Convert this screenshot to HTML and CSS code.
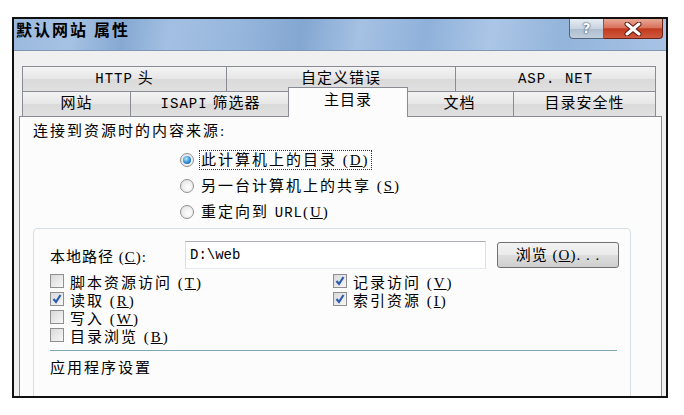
FILE: index.html
```html
<!DOCTYPE html>
<html>
<head>
	<meta charset="utf-8">
	<title>默认网站 属性</title>
	<link rel="stylesheet" href="styles.css">
</head>
<body>
<div class="window">
	<div class="titlebar">
		<span class="title">默认网站 属性</span>
		<div class="caption-buttons">
			<span class="btn-help">?</span>
			<span class="btn-close">
				<svg width="20" height="14" viewBox="0 0 20 14">
					<path d="M4 2 L16 12 M16 2 L4 12" stroke="#5a1a10" stroke-width="5" stroke-linecap="round"/>
					<path d="M4 2 L16 12 M16 2 L4 12" stroke="#ffffff" stroke-width="3" stroke-linecap="round"/>
				</svg>
			</span>
		</div>
	</div>

	<div class="client">
		<div class="tab-row">
			<div class="tab w-http"><span class="mono">HTTP</span> 头</div>
			<div class="tab w-errors">自定义错误</div>
			<div class="tab w-asp last"><span class="mono">ASP. NET</span></div>
		</div>
		<div class="tab-row">
			<div class="tab w-site">网站</div>
			<div class="tab w-isapi"><span class="mono">ISAPI</span> 筛选器</div>
			<div class="tab w-home selected">主目录</div>
			<div class="tab w-docs">文档</div>
			<div class="tab w-security last">目录安全性</div>
		</div>

		<div class="panel">
			<div class="prompt">连接到资源时的内容来源:</div>
			<div class="radios">
				<div class="radio-row"><span class="radio checked"></span><span class="focus">此计算机上的目录 (<u>D</u>)</span></div>
				<div class="radio-row"><span class="radio"></span><span class="label">另一台计算机上的共享 (<u>S</u>)</span></div>
				<div class="radio-row"><span class="radio"></span><span class="label">重定向到 <span class="mono">URL</span>(<u>U</u>)</span></div>
			</div>

			<div class="group">
				<div class="path-row">
					<span class="path-label">本地路径 (<u>C</u>):</span>
					<div class="textbox mono">D:\web</div>
					<div class="button">浏览 (<u>O</u>). . .</div>
				</div>

				<div class="checks">
					<div class="check-row"><span class="cb"></span><span>脚本资源访问 (<u>T</u>)</span></div>
					<div class="check-row"><span class="cb checked"><svg width="12" height="12" viewBox="0 0 12 12"><path d="M2.5 6 L5 9 L9.5 2" fill="none" stroke="#2b5bb0" stroke-width="2.2"/></svg></span><span>记录访问 (<u>V</u>)</span></div>
					<div class="check-row"><span class="cb checked"><svg width="12" height="12" viewBox="0 0 12 12"><path d="M2.5 6 L5 9 L9.5 2" fill="none" stroke="#2b5bb0" stroke-width="2.2"/></svg></span><span>读取 (<u>R</u>)</span></div>
					<div class="check-row"><span class="cb checked"><svg width="12" height="12" viewBox="0 0 12 12"><path d="M2.5 6 L5 9 L9.5 2" fill="none" stroke="#2b5bb0" stroke-width="2.2"/></svg></span><span>索引资源 (<u>I</u>)</span></div>
					<div class="check-row"><span class="cb"></span><span>写入 (<u>W</u>)</span></div>
					<div class="check-row"></div>
					<div class="check-row"><span class="cb"></span><span>目录浏览 (<u>B</u>)</span></div>
					<div class="check-row"></div>
				</div>

				<div class="divider"></div>
				<div class="section">应用程序设置</div>
			</div>
		</div>
	</div>
</div>
</body>
</html>
```

FILE: styles.css
```css
html {
  font-family: "Liberation Serif", "Noto Sans CJK SC", serif;
}

body {
  margin: 0;
  background: #ffffff;
  color: #000000;
  font-size: 15px;
}

u {
  text-decoration: underline;
  text-underline-offset: 1px;
}

.mono {
  font-family: "Liberation Mono", "Noto Sans CJK SC", monospace;
  font-size: 14px;
  letter-spacing: 1px;
}

.window {
  box-sizing: border-box;
  width: 656px;
  height: 381px;
  margin: 17px 0 0 12px;
  border: 2px solid #111111;
  overflow: hidden;
  display: flex;
  flex-direction: column;
}

/* title bar */
.titlebar {
  height: 31px;
  flex: none;
  display: flex;
  align-items: flex-start;
  background: linear-gradient(100deg, #9ab9de 0%, #a6c2e3 9%, #86a9d3 17%, #a3c0e2 24%, #98b7dd 34%, #83a7d2 44%, #a5c1e3 53%, #8fb1da 63%, #abc6e6 73%, #93b4db 84%, #a8c3e4 100%);
  border-bottom: 1px solid #7f97b5;
}

.title {
  font-weight: bold;
  font-size: 16px;
  letter-spacing: 2px;
  line-height: 24px;
  padding: 0 0 0 2px;
}

.caption-buttons {
  margin-left: auto;
  margin-right: 3px;
  display: flex;
}

.btn-help {
  box-sizing: border-box;
  width: 35px;
  height: 20px;
  border: 1px solid #56677d;
  border-top: none;
  border-radius: 0 0 0 4px;
  background: linear-gradient(#e6ecf3, #c9d4e1 50%, #aebdcf 51%, #c2cedc);
  text-align: center;
  font-family: "DejaVu Sans", sans-serif;
  font-weight: bold;
  font-size: 14px;
  line-height: 18px;
  color: #ffffff;
  text-shadow: 0 0 2px #33445a, 0 0 1px #33445a;
}

.btn-close {
  box-sizing: border-box;
  width: 59px;
  height: 20px;
  border: 1px solid #6b2418;
  border-top: none;
  border-left: none;
  border-radius: 0 0 4px 0;
  background: linear-gradient(#e9a796, #d8745f 45%, #c23a1f 52%, #cf5a3f);
  display: flex;
  justify-content: center;
  align-items: center;
}

/* client area */
.client {
  flex: 1;
  background: #f0f0f0;
  padding: 15px 4px 0 5px;
}

.tab-row {
  display: flex;
  height: 25px;
  margin: 0 5px 0 3px;
}

.tab {
  box-sizing: border-box;
  border-left: 1px solid #898c95;
  border-top: 1px solid #898c95;
  background: linear-gradient(#f3f3f3, #e6e6e6 50%, #dadada 51%, #e0e0e0);
  text-align: center;
  line-height: 23px;
  letter-spacing: 1px;
  white-space: nowrap;
}

.tab.last {
  border-right: 1px solid #898c95;
}

.w-http { width: 204px; }
.w-errors { width: 229px; }
.w-asp { width: 201px; }
.w-site { width: 108px; }
.w-isapi { width: 160px; }
.w-home { width: 116px; }
.w-docs { width: 107px; }
.w-security { width: 143px; }

.tab.selected {
  position: relative;
  z-index: 1;
  height: 30px;
  margin: -4px -2px -1px -2px;
  width: 120px;
  background: #fcfcfc;
  border-right: 1px solid #898c95;
  line-height: 24px;
}

.tab.selected + .tab {
  border-left: none;
}

.panel {
  box-sizing: border-box;
  height: 300px;
  border: 1px solid #898c95;
  background: #fcfcfc;
  padding: 5px 0 0 13px;
}

.prompt {
  line-height: 18px;
  letter-spacing: 2px;
}

.radios {
  margin: 7px 0 0 147px;
}

.radio-row {
  height: 26px;
  display: flex;
  align-items: center;
  gap: 7px;
  letter-spacing: 2px;
}

.radio {
  box-sizing: border-box;
  width: 14px;
  height: 14px;
  border-radius: 50%;
  border: 1px solid #8e8f8f;
  background: radial-gradient(circle at 60% 60%, #ffffff, #dedede);
  display: flex;
  justify-content: center;
  align-items: center;
}

.radio.checked::after {
  content: "";
  width: 8px;
  height: 8px;
  border-radius: 50%;
  background: radial-gradient(circle at 40% 35%, #b8ebff, #2a8ad8 55%, #0d4f90);
}

.focus {
  border: 1px dotted #333333;
  line-height: 18px;
  padding: 0 1px;
  margin-left: -2px;
}

.label {
  line-height: 18px;
}

/* directory group */
.group {
  box-sizing: border-box;
  width: 598px;
  height: 220px;
  margin-top: 3px;
  border: 1px solid #d5dfe5;
  border-radius: 4px;
  padding: 12px 0 0 16px;
}

.path-row {
  display: flex;
  align-items: center;
  height: 28px;
}

.path-label {
  width: 135px;
  letter-spacing: 1px;
}

.textbox {
  box-sizing: border-box;
  width: 301px;
  height: 28px;
  background: #ffffff;
  border: 1px solid #dbdfe6;
  border-top-color: #abadb3;
  border-bottom-color: #e3e9ef;
  padding-left: 4px;
  line-height: 26px;
  letter-spacing: 0;
}

.button {
  box-sizing: border-box;
  width: 122px;
  height: 26px;
  margin-left: 11px;
  border: 1px solid #707070;
  border-radius: 3px;
  background: linear-gradient(#f2f2f2, #ebebeb 48%, #dddddd 52%, #cfcfcf);
  text-align: center;
  line-height: 24px;
  letter-spacing: 1px;
}

.checks {
  display: grid;
  grid-template-columns: 283px auto;
  margin-top: 3px;
}

.check-row {
  height: 18px;
  display: flex;
  align-items: center;
  gap: 6px;
  letter-spacing: 2px;
}

.cb {
  box-sizing: border-box;
  width: 14px;
  height: 14px;
  border: 1px solid #8f8f8f;
  background: linear-gradient(135deg, #d9d9d9, #f7f7f7);
  display: flex;
  justify-content: center;
  align-items: center;
}

.divider {
  width: 567px;
  height: 1px;
  margin-top: 6px;
  background: #7fa6b3;
}

.section {
  margin-top: 8px;
  line-height: 18px;
  letter-spacing: 2px;
}
```
